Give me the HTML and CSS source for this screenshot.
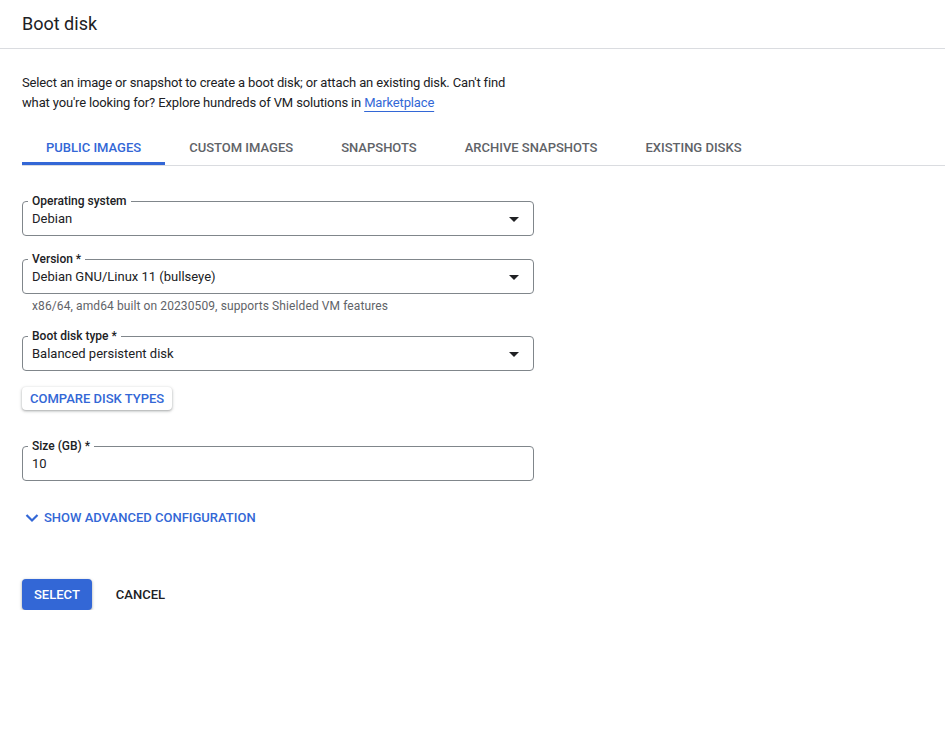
FILE: index.html
```html
<!DOCTYPE html>
<html lang="en">
<head>
<meta charset="utf-8">
<title>Boot disk</title>
<link rel="stylesheet" href="styles.css">
</head>
<body>
<header class="header"><h1 class="title">Boot disk</h1></header>
<main class="content">
  <p class="desc">Select an image or snapshot to create a boot disk; or attach an existing disk. Can't find<br>what you're looking for? Explore hundreds of VM solutions in <a class="link" href="#">Marketplace</a></p>
  <nav class="tabs">
    <div class="tab active">PUBLIC IMAGES</div>
    <div class="tab">CUSTOM IMAGES</div>
    <div class="tab">SNAPSHOTS</div>
    <div class="tab">ARCHIVE SNAPSHOTS</div>
    <div class="tab">EXISTING DISKS</div>
  </nav>
  <fieldset class="field first">
    <legend class="label">Operating system</legend>
    <div class="value"><span>Debian</span><span class="arrow"></span></div>
  </fieldset>
  <fieldset class="field">
    <legend class="label">Version *</legend>
    <div class="value"><span>Debian GNU/Linux 11 (bullseye)</span><span class="arrow"></span></div>
  </fieldset>
  <div class="hint">x86/64, amd64 built on 20230509, supports Shielded VM features</div>
  <fieldset class="field after-hint">
    <legend class="label">Boot disk type *</legend>
    <div class="value"><span>Balanced persistent disk</span><span class="arrow"></span></div>
  </fieldset>
  <button class="raised">COMPARE DISK TYPES</button>
  <fieldset class="field size">
    <legend class="label">Size (GB) *</legend>
    <div class="value"><span>10</span></div>
  </fieldset>
  <div class="advanced">
    <svg class="chev" width="14" height="10" viewBox="0 0 14 10"><path d="M1.5 2 L7 7.5 L12.5 2" fill="none" stroke="#3367d6" stroke-width="2.2"/></svg>
    <span>SHOW ADVANCED CONFIGURATION</span>
  </div>
  <div class="actions">
    <button class="primary">SELECT</button>
    <button class="flat">CANCEL</button>
  </div>
</main>
</body>
</html>
```
FILE: styles.css
```css
* { box-sizing: border-box; }
body {
  margin: 0;
  font-family: Roboto, "Liberation Sans", Arial, sans-serif;
  color: #202124;
  background: #fff;
}
.header {
  height: 49px;
  border-bottom: 1px solid #dadce0;
  padding: 0 22px;
  display: flex;
  align-items: center;
}
.title {
  margin: 0;
  font-size: 18px;
  font-weight: 400;
  line-height: 24px;
}
.content {
  padding-left: 22px;
}
.desc {
  margin: 24px 0 0;
  font-size: 13px;
  line-height: 20px;
  letter-spacing: -0.15px;
  color: #202124;
}
.link {
  color: #3367d6;
  text-decoration: underline;
  text-underline-offset: 4px;
  text-decoration-thickness: 1px;
}
.tabs {
  display: flex;
  margin-top: 16px;
  border-bottom: 1px solid #dadce0;
}
.tab {
  height: 36px;
  padding: 3px 24px 0;
  display: flex;
  align-items: center;
  font-size: 13px;
  font-weight: 500;
  color: #5f6368;
  border-bottom: 3px solid transparent;
}
.tab.active {
  color: #3367d6;
  border-bottom-color: #3367d6;
}
.field {
  width: 512px;
  margin: 15px 0 0;
  padding: 1px 5px 7px;
  border: 1px solid #80868b;
  border-radius: 4px;
  min-width: 0;
}
.field.first { margin-top: 27px; }
.field.after-hint { margin-top: 14px; }
.field.size { margin-top: 28px; }
.label {
  padding: 0 4px;
  font-size: 12px;
  font-weight: 500;
  line-height: 16px;
  color: #202124;
}
.value {
  display: flex;
  align-items: center;
  justify-content: space-between;
  padding: 0 9px 0 4px;
  font-size: 13px;
  line-height: 18px;
  color: #202124;
}
.arrow {
  width: 0;
  height: 0;
  border-left: 5px solid transparent;
  border-right: 5px solid transparent;
  border-top: 5px solid #202124;
}
.hint {
  margin-top: 4px;
  padding-left: 10px;
  font-size: 12px;
  line-height: 16px;
  letter-spacing: 0.1px;
  color: #5f6368;
}
.raised {
  display: block;
  margin-top: 16px;
  height: 23px;
  padding: 0 8px;
  border: none;
  border-radius: 4px;
  background: #fff;
  box-shadow: 0 1px 2px rgba(60,64,67,.3), 0 1px 3px 1px rgba(60,64,67,.15);
  font-family: inherit;
  font-size: 13px;
  font-weight: 500;
  color: #3367d6;
}
.advanced {
  margin-top: 28px;
  display: flex;
  align-items: center;
  gap: 5px;
  padding-left: 3px;
  font-size: 13px;
  font-weight: 500;
  color: #3367d6;
  line-height: 18px;
}
.actions {
  margin-top: 52px;
  display: flex;
  align-items: center;
}
.primary {
  height: 31px;
  padding: 0 12px;
  border: none;
  border-radius: 4px;
  background: #3367d6;
  color: #fff;
  font-family: inherit;
  font-size: 13px;
  font-weight: 500;
  box-shadow: 0 1px 2px rgba(60,64,67,.3), 0 1px 3px 1px rgba(60,64,67,.15);
}
.flat {
  margin-left: 12px;
  height: 31px;
  padding: 0 12px;
  border: none;
  background: transparent;
  color: #202124;
  font-family: inherit;
  font-size: 13px;
  font-weight: 500;
}
```
